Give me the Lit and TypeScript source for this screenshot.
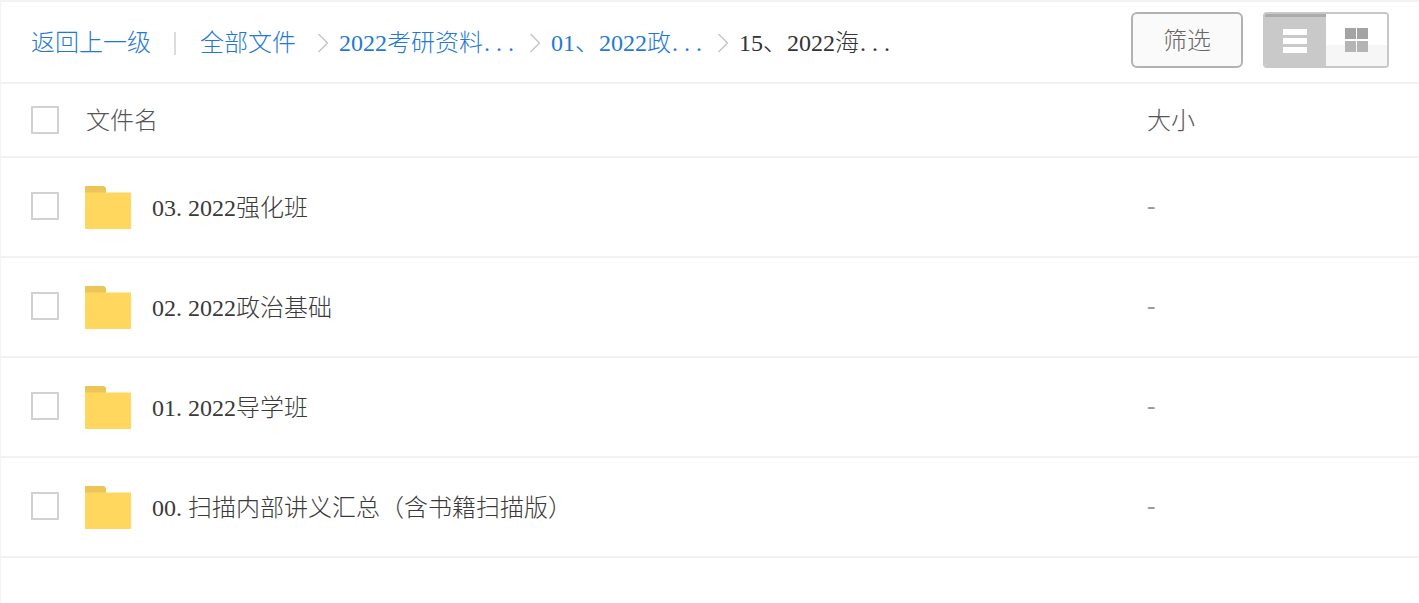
import { LitElement, html, css } from "lit";
import { customElement } from "lit/decorators.js";

const rows = [
  "03.2022强化班",
  "02.2022政治基础",
  "01.2022导学班",
  "00.扫描内部讲义汇总（含书籍扫描版）",
];

const wide = (t: string) =>
  t.split(/(\.)/).map((p) => (p === "." ? html`<span class="dot">.</span>` : p));

const chevron = () => html`<svg class="chev" width="12" height="22" viewBox="0 0 12 22"><path d="M1.5 2 L10.5 11 L1.5 20" fill="none" stroke="#c4c4c4" stroke-width="1.4"/></svg>`;

@customElement("app-root")
export class AppRoot extends LitElement {
  static styles = css`
    :host {
      display: block;
      width: 1419px;
      height: 603px;
      overflow: hidden;
      background: #fff;
      box-sizing: border-box;
      border-top: 2px solid #f2f2f2;
      border-left: 1px solid #f4f4f4;
      font-family: "Liberation Serif", "Noto Sans CJK SC", serif;
      font-size: 24px;
      font-weight: 300;
      color: #555;
    }
    .dot {
      display: inline-block;
      width: 12px;
      box-sizing: border-box;
      padding-left: 1px;
      text-align: left;
    }
    .toolbar {
      height: 82px;
      box-sizing: border-box;
      border-bottom: 2px solid #f2f2f2;
      display: flex;
      align-items: center;
      padding: 0 30px 4px 30px;
    }
    .crumbs {
      display: flex;
      align-items: center;
      flex: 1;
      color: #1f7ad6;
      line-height: 28px;
      white-space: nowrap;
      margin-top: 6px;
    }
    .sep {
      width: 2px;
      height: 23px;
      background: #dcdcdc;
      margin: 0 24px 0 23px;
    }
    .chev {
      margin: 0 10px 0 10px;
      flex: none;
    }
    .chev:first-of-type {
      margin-left: 21px;
    }
    .current {
      color: #333;
    }
    .filter {
      width: 112px;
      height: 56px;
      box-sizing: border-box;
      border: 2px solid #b2b2b2;
      border-radius: 6px;
      background: #fafafa;
      color: #666;
      display: flex;
      align-items: center;
      justify-content: center;
      padding-bottom: 4px;
      margin-right: 20px;
    }
    .toggle {
      width: 126px;
      height: 56px;
      box-sizing: border-box;
      border: 2px solid #c8c8c8;
      border-radius: 4px;
      display: flex;
      overflow: hidden;
      background: #fff;
    }
    .toggle > div {
      display: flex;
      align-items: center;
      justify-content: center;
    }
    .list {
      width: 63px;
      flex: none;
      margin: -2px 0 -2px -2px;
      background: #c9c9c9;
      border-top: 5px solid #ababab;
      box-sizing: border-box;
      padding-bottom: 3px;
    }
    .grid {
      flex: 1;
      background: linear-gradient(#fff 0 60%, #f6f6f6 60% 100%);
    }
    .row {
      display: flex;
      align-items: center;
      box-sizing: border-box;
      border-bottom: 2px solid #f2f2f2;
      height: 100px;
      padding-left: 30px;
    }
    .row.head {
      height: 74px;
    }
    .box {
      width: 28px;
      height: 28px;
      box-sizing: border-box;
      border: 2px solid #d2d2d2;
      background: #fff;
      flex: none;
      margin-bottom: 2px;
    }
    .head .box {
      margin-bottom: 0;
    }
    .folder {
      margin-left: 26px;
      flex: none;
    }
    .name {
      margin-left: 21px;
      width: 992px;
      flex: none;
      white-space: nowrap;
      color: #3a3a3a;
      margin-bottom: 4px;
    }
    .name .dot {
      padding-left: 0;
    }
    .head .label {
      margin-left: 27px;
      width: 1061px;
      flex: none;
      color: #555;
      margin-bottom: 4px;
    }
    .head .big {
      margin-bottom: 4px;
    }
    .size {
      color: #999;
      font-family: "Liberation Mono", monospace;
    }
  `;

  render() {
    return html`
      <div class="toolbar">
        <div class="crumbs">
          <span>返回上一级</span>
          <span class="sep"></span>
          <span>全部文件</span>
          ${chevron()}
          <span>${wide("2022考研资料...")}</span>
          ${chevron()}
          <span>${wide("01、2022政...")}</span>
          ${chevron()}
          <span class="current">${wide("15、2022海...")}</span>
        </div>
        <div class="filter">筛选</div>
        <div class="toggle">
          <div class="list">
            <svg width="24" height="24" viewBox="0 0 24 24"><path fill="#fff" d="M0 0h24v6H0zM0 9h24v6H0zM0 18h24v6H0z"/></svg>
          </div>
          <div class="grid">
            <svg width="23" height="24" viewBox="0 0 23 24"><path fill="#a4a4a4" d="M0 0h11v11H0zM12 0h11v11H12z"/><path fill="#b4b4b4" d="M0 13h11v11H0zM12 13h11v11H12z"/></svg>
          </div>
        </div>
      </div>
      <div class="row head">
        <span class="box"></span>
        <span class="label">文件名</span>
        <span class="big">大小</span>
      </div>
      ${rows.map(
        (r) => html`
          <div class="row">
            <span class="box"></span>
            <svg class="folder" width="46" height="43" viewBox="0 0 46 43">
              <path fill="#ecc457" d="M0 0h18q2 0 3 2v6H0z"/>
              <path fill="#ffd75e" d="M0 6.500h46v36.500H0z"/>
            </svg>
            <span class="name">${wide(r)}</span>
            <span class="size">-</span>
          </div>
        `
      )}
    `;
  }
}
